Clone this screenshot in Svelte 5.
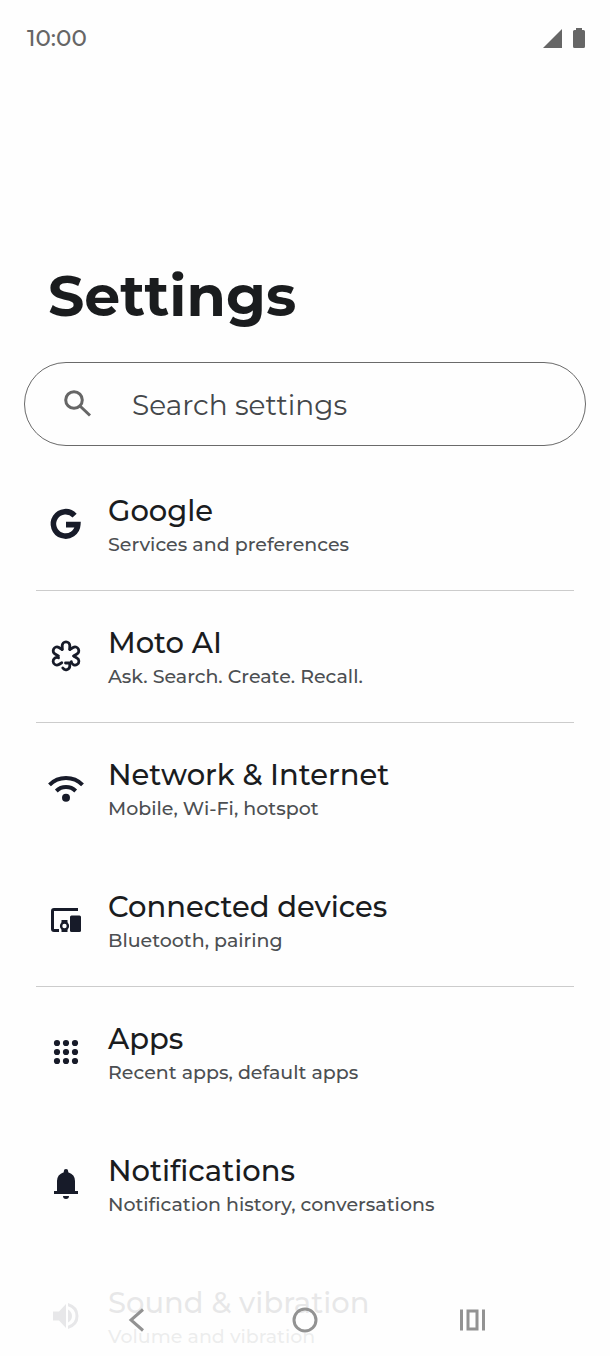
<script>
    let query = $state('');

    const items = [
        {icon: 'google', title: 'Google', summary: 'Services and preferences', divider: true},
        {icon: 'moto', title: 'Moto AI', summary: 'Ask. Search. Create. Recall.', divider: true},
        {icon: 'wifi', title: 'Network & Internet', summary: 'Mobile, Wi-Fi, hotspot'},
        {icon: 'devices', title: 'Connected devices', summary: 'Bluetooth, pairing', divider: true},
        {icon: 'apps', title: 'Apps', summary: 'Recent apps, default apps'},
        {icon: 'bell', title: 'Notifications', summary: 'Notification history, conversations'},
        {icon: 'sound', title: 'Sound & vibration', summary: 'Volume and vibration'},
    ];

    const dots = [9, 18, 27];
    const petals = [0, 60, 120, 240, 300];
</script>

<div class="screen">
    <header class="status">
        <span>10:00</span>
        <div class="status-icons">
            <svg width="20" height="20" viewBox="0 0 20 20"><path d="M0 20L19 1V20Z"/></svg>
            <svg width="12" height="20" viewBox="0 0 12 20"><path d="M3 0h6v2h1.500q1.500 0 1.500 1.500v15q0 1.500-1.500 1.500h-9Q0 20 0 18.500v-15Q0 2 1.500 2H3Z"/></svg>
        </div>
    </header>

    <main>
        <h1>Settings</h1>
        <label class="search">
            <svg width="36" height="36" viewBox="0 0 36 36" fill="none" stroke="#666" stroke-width="3">
                <circle cx="14" cy="14" r="8.300"/>
                <path d="M20 20L30 29.500"/>
            </svg>
            <input type="text" placeholder="Search settings" aria-label="Search settings" bind:value={query}>
        </label>

        <ul>
            {#each items as item}
                <li class:divider={item.divider}>
                    <a href="#{item.icon}">
                        <svg width="36" height="36" viewBox="0 0 36 36">
                            {#if item.icon === 'google'}
                                <path fill="none" stroke="currentColor" stroke-width="5.600" d="M26.600 9.600A12.200 12.200 0 1 0 29.800 18.600H18"/>
                            {:else if item.icon === 'moto'}
                                <g fill="none" stroke="currentColor" stroke-width="2.800" stroke-linecap="round" stroke-linejoin="round">
                                    {#each petals as angle}
                                        {#if angle === 120 || angle === 240}
                                            <path transform="rotate({angle} 18 18)" d="M14.300 11L14.200 7.600a3.800 3.800 0 1 1 6 3"/>
                                        {:else}
                                            <path transform="rotate({angle} 18 18)" d="M14.300 11.400L14.200 7.600a3.800 3.800 0 0 1 7.600 0L21.700 11.400"/>
                                        {/if}
                                    {/each}
                                    <path d="M17.500 25H21.700L21.800 28.200A3.800 3.800 0 0 1 14.800 30"/>
                                </g>
                            {:else if item.icon === 'wifi'}
                                <g fill="none" stroke="currentColor" stroke-width="4">
                                    <path d="M1.500 14.800A23.400 23.400 0 0 1 34.500 14.800"/>
                                    <path d="M8.300 21A14 14 0 0 1 27.700 21"/>
                                </g>
                                <circle cx="18" cy="27.800" r="4"/>
                            {:else if item.icon === 'devices'}
                                <path d="M6 6h24v3H6v18h5v3H6q-3 0-3-3V9q0-3 3-3Z"/>
                                <rect x="22" y="13.500" width="11" height="16.500" rx="1.500"/>
                                <path d="M13.500 18h6v3h-6zM13.500 27h6v3h-6z"/>
                                <circle cx="16.500" cy="24" r="3.400" fill="none" stroke="currentColor" stroke-width="2.400"/>
                            {:else if item.icon === 'apps'}
                                {#each dots as y}
                                    {#each dots as x}
                                        <circle cx={x} cy={y} r="3.100"/>
                                    {/each}
                                {/each}
                            {:else if item.icon === 'bell'}
                                <path d="M6 28v-3h3V15q0-6.500 6.800-8.800V5.200a2.200 2.200 0 0 1 4.400 0v1Q27 8.500 27 15v10h3v3ZM15 30h6q0 3-3 3t-3-3Z"/>
                            {:else}
                                <path d="M5 13.500v9h6l7 7.500V6L11 13.500ZM20 11.500v13q4-2.500 4-6.500t-4-6.500ZM20 5v3.200q7.500 2.500 7.500 9.800T20 27.800V31q10.500-3 10.500-13T20 5Z"/>
                            {/if}
                        </svg>
                        <span class="text">
                            <span class="title">{item.title}</span>
                            <span class="summary">{item.summary}</span>
                        </span>
                    </a>
                </li>
            {/each}
        </ul>
    </main>

    <nav>
        <button aria-label="Back">
            <svg width="28" height="28" viewBox="0 0 28 28"><path d="M20 3.500L8 14L20 24.500"/></svg>
        </button>
        <button aria-label="Home">
            <svg width="28" height="28" viewBox="0 0 28 28"><circle cx="14" cy="14" r="11"/></svg>
        </button>
        <button aria-label="Recent apps">
            <svg width="28" height="28" viewBox="0 0 28 28"><path d="M2.500 3.500v21M24.500 3.500v21M9 5h9v18h-9Z"/></svg>
        </button>
    </nav>
</div>

<style>
    :global(body) {
        background: #fefefe;
    }

    .screen {
        height: 100vh;
        overflow: hidden;
        font-family: Montserrat, Inter, sans-serif;
        color: #1a1c1e;
    }

    .status {
        display: flex;
        align-items: center;
        justify-content: space-between;
        height: 76px;
        padding: 0 25px 0 27px;
        font-size: 23px;
        font-weight: 500;
        color: #666;
    }

    .status-icons {
        display: flex;
        gap: 10px;
        fill: #666;
    }

    h1 {
        margin: 182px 48px 28px;
        font-size: 57px;
        line-height: 76px;
        font-weight: 700;
    }

    .search {
        display: flex;
        align-items: center;
        gap: 36px;
        box-sizing: border-box;
        height: 84px;
        margin: 0 24px;
        padding: 0 35px;
        border: 1px solid #6a6a6a;
        border-radius: 42px;
    }

    .search input {
        flex: 1;
        min-width: 0;
        padding: 2px 0 0;
        border: 0;
        outline: 0;
        background: none;
        font-family: inherit;
        font-size: 28px;
        color: #44474a;
    }

    .search input::placeholder {
        color: #44474a;
        opacity: 1;
    }

    ul {
        margin: 13px 36px 0;
        padding: 0;
        list-style: none;
    }

    li {
        box-sizing: border-box;
        height: 132px;
        padding-bottom: 2px;
        border-bottom: 1px solid transparent;
    }

    li.divider {
        border-color: #ccc;
    }

    a {
        display: flex;
        align-items: center;
        gap: 24px;
        height: 100%;
        padding: 0 12px;
        color: #171b29;
        text-decoration: none;
    }

    a svg {
        fill: currentColor;
    }

    .text {
        display: flex;
        flex-direction: column;
        padding-top: 6px;
    }

    .title {
        font-size: 29px;
        line-height: 36px;
        font-weight: 500;
        color: #1a1c1e;
    }

    .summary {
        font-size: 19px;
        line-height: 32px;
        font-weight: 500;
        color: #4c4f52;
    }

    nav {
        position: fixed;
        left: 0;
        right: 0;
        bottom: 0;
        display: grid;
        grid-template-columns: repeat(3, 1fr);
        height: 72px;
        padding: 0 53px;
        background: rgba(254, 254, 254, 0.9);
    }

    nav button {
        display: flex;
        align-items: center;
        justify-content: center;
        padding: 0;
        border: 0;
        background: none;
    }

    nav svg {
        fill: none;
        stroke: #929292;
        stroke-width: 3;
    }
</style>
